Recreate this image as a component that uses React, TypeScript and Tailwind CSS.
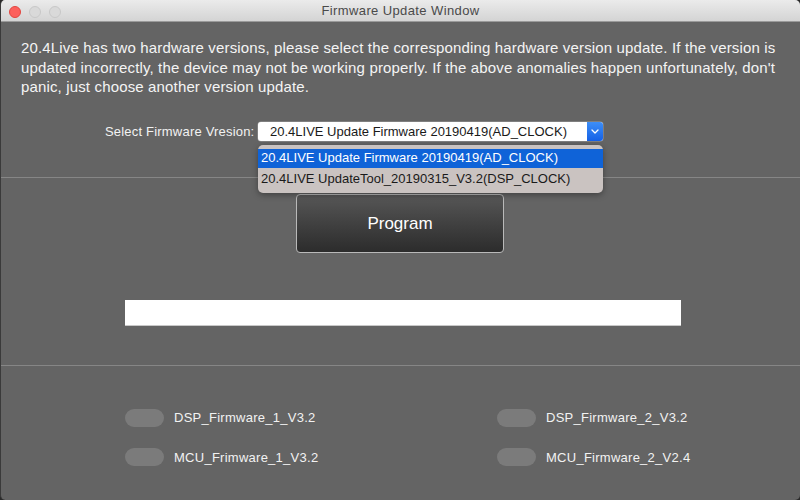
const font = { fontFamily: '"Liberation Sans", Arial, sans-serif' };

const toggles = [
  ['DSP_Firmware_1_V3.2', 'DSP_Firmware_2_V3.2'],
  ['MCU_Frimware_1_V3.2', 'MCU_Firmware_2_V2.4'],
];

function Toggle({ label }: { label: string }) {
  return (
    <div className="flex items-center gap-[10px]">
      <div className="h-[18px] w-[39px] rounded-full bg-[#7b7b7b]" />
      <span className="text-[13px] tracking-[0.02em] text-[#f2f2f2]">{label}</span>
    </div>
  );
}

export default function App() {
  return (
    <div className="h-[500px] w-[800px] bg-[#2a2a2a]" style={font}>
      <div className="flex h-full w-full flex-col overflow-hidden rounded-[5px] border-l border-[#3a3a3a] bg-[#646464]">
        {/* title bar */}
        <div className="relative flex h-[22px] shrink-0 items-center justify-center border-b border-[#9a9a9a] bg-gradient-to-b from-[#ebebeb] to-[#d4d4d4]">
          <div className="absolute left-[8px] top-[6px] flex gap-[8px]">
            <div className="h-[12px] w-[12px] rounded-full border border-[#e2463f] bg-[#fc605c]" />
            <div className="h-[12px] w-[12px] rounded-full border border-[#c8c8c8] bg-[#d9d9d9]" />
            <div className="h-[12px] w-[12px] rounded-full border border-[#c8c8c8] bg-[#d9d9d9]" />
          </div>
          <span className="text-[13px] tracking-[0.03em] text-[#4a4a4a]">Firmware Update Window</span>
        </div>

        {/* description */}
        <p className="mt-[16px] whitespace-nowrap px-[20px] text-[15px] leading-[19.5px] tracking-[0.01em] text-[#f4f4f4]">
          20.4Live has two hardware versions, please select the corresponding hardware version update. If the version is
          <br />
          updated incorrectly, the device may not be working properly. If the above anomalies happen unfortunately, don't
          <br />
          panic, just choose another version update.
        </p>

        {/* select row */}
        <div className="relative mt-[25px] flex items-center pl-[104px]">
          <span className="w-[153px] text-[13px] tracking-[0.015em] text-[#f2f2f2]">Select Firmware Vresion:</span>
          <div className="flex h-[19px] w-[345px] items-center rounded-[3px] bg-white shadow-[0_0_0_0.5px_#9a9a9a]">
            <span className="flex-1 pl-[12px] text-[13px] text-[#1a1a1a]">20.4LIVE Update Firmware 20190419(AD_CLOCK)</span>
            <div className="flex h-[19px] w-[16px] items-center justify-center rounded-r-[3px] bg-gradient-to-b from-[#3d8ef7] to-[#1560e6]">
              <svg width="8" height="5" viewBox="0 0 8 5" fill="none">
                <path d="M1 1l3 3 3-3" stroke="white" strokeWidth="1.3" strokeLinecap="round" strokeLinejoin="round" />
              </svg>
            </div>
          </div>

          {/* open dropdown */}
          <div className="absolute left-[257px] top-[23px] z-10 w-[345px] rounded-[5px] bg-[#cac3c1] py-[4px] shadow-[0_2px_6px_rgba(0,0,0,0.35)]">
            <div className="flex h-[19px] items-center bg-[#0f63d8] pl-[3px] text-[13px] text-white">
              20.4LIVE Update Firmware 20190419(AD_CLOCK)
            </div>
            <div className="mt-[2px] flex h-[19px] items-center pl-[3px] text-[13px] text-[#1a1a1a]">
              20.4LIVE UpdateTool_20190315_V3.2(DSP_CLOCK)
            </div>
          </div>
        </div>

        <div className="mt-[36px] h-px shrink-0 bg-[#868686]" />

        {/* program button */}
        <div className="mt-[16px] flex justify-center pr-[1px]">
          <button className="h-[59px] w-[208px] rounded-[4px] border border-[#b9b9b9] bg-gradient-to-b from-[#575757] to-[#2c2c2c] text-[17px] text-white">
            Program
          </button>
        </div>

        {/* progress */}
        <div className="mt-[47px] pl-[124px]">
          <div className="h-[26px] w-[556px] border-b border-[#c8c8c8] bg-white" />
        </div>

        <div className="mt-[39px] h-px shrink-0 bg-[#868686]" />

        {/* toggles */}
        <div className="mt-[42px] grid grid-cols-[372px_auto] gap-y-[20px] pl-[124px]">
          {toggles.map((row) =>
            row.map((t) => <Toggle key={t} label={t} />)
          )}
        </div>
      </div>
    </div>
  );
}
